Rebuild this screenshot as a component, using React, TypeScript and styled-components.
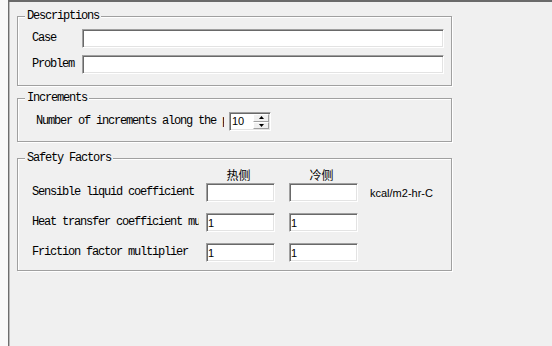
import React from 'react';
import styled, { createGlobalStyle } from 'styled-components';

const GlobalStyle = createGlobalStyle`
  html, body {
    margin: 0;
    padding: 0;
    width: 552px;
    height: 346px;
    overflow: hidden;
    background: #f0f0f0;
  }
  #root {
    height: 100%;
  }
`;

const mono = `"Liberation Mono", "DejaVu Sans Mono", monospace`;
const sans = `"Liberation Sans", Arial, sans-serif`;

const Window = styled.div`
  display: flex;
  width: 552px;
  height: 346px;
`;

const TreeStrip = styled.div`
  width: 8px;
  flex: none;
  background: #f9f9f9;
  overflow: hidden;
  display: flex;
  flex-direction: column;
  padding-top: 64px;
  gap: 8px;
`;

const TreeItem = styled.span<{ $color: string }>`
  display: block;
  margin-left: -4px;
  font: 11px/12px ${sans};
  color: ${(p) => p.$color};
  white-space: nowrap;
`;

const Pane = styled.div`
  flex: 1;
  border-left: 1px solid #6e6e6e;
  border-top: 2px solid #6a6a6a;
  box-shadow: inset 1px 0 #b9b9b9;
  background: #f0f0f0;
  padding: 8px 0 0 8px;
`;

const Group = styled.fieldset<{ $gap?: number }>`
  margin: ${(p) => p.$gap ?? 0}px 0 0 0;
  padding: 0;
  width: 435px;
  box-sizing: border-box;
  border: 1px solid #a0a0a0;
  box-shadow: inset 1px 1px #fff, 1px 1px #fff;
  min-inline-size: 0;
`;

const Legend = styled.legend`
  margin-left: 7px;
  padding: 0 2px;
  font: 12px/12px ${mono};
  letter-spacing: -1.2px;
  color: #000;
  background: #f0f0f0;
`;

const GroupBody = styled.div<{ $pt: number; $pb: number; $pl: number }>`
  padding: ${(p) => p.$pt}px 0 ${(p) => p.$pb}px ${(p) => p.$pl}px;
  display: flex;
  flex-direction: column;
  gap: 7px;
`;

const FieldRow = styled.div`
  display: flex;
  align-items: center;
  height: 19px;
`;

const Label = styled.span<{ $width: number; $after?: number }>`
  width: ${(p) => p.$width}px;
  margin-right: ${(p) => p.$after ?? 0}px;
  flex: none;
  font: 12px/13px ${mono};
  letter-spacing: -1.2px;
  color: #000;
  white-space: nowrap;
  overflow: hidden;
`;

const TextBox = styled.input<{ $width: number }>`
  width: ${(p) => p.$width}px;
  height: 19px;
  box-sizing: border-box;
  margin: 0;
  padding: 0 1px;
  border: 1px solid;
  border-color: #a0a0a0 #fff #fff #a0a0a0;
  box-shadow: inset 1px 1px #696969, inset -1px -1px #e3e3e3;
  background: #fff;
  font: 11px ${sans};
  color: #000;
  outline: none;
`;

const Spinner = styled.div`
  display: flex;
  width: 42px;
  height: 19px;
  box-sizing: border-box;
  border: 1px solid;
  border-color: #a0a0a0 #fff #fff #a0a0a0;
  box-shadow: inset 1px 1px #696969, inset -1px -1px #e3e3e3;
  background: #fff;
  padding: 1px;
`;

const SpinValue = styled.span`
  flex: 1;
  font: 11px/15px ${sans};
  color: #000;
  padding-left: 1px;
`;

const SpinButtons = styled.div`
  width: 16px;
  display: flex;
  flex-direction: column;
`;

const SpinButton = styled.span`
  flex: 1;
  display: flex;
  align-items: center;
  justify-content: center;
  background: #f0f0f0;
  box-sizing: border-box;
  border: 1px solid;
  border-color: #fff #a0a0a0 #a0a0a0 #fff;
`;

const SafetyBody = styled.div`
  padding: 2px 0 8px 14px;
  display: flex;
  flex-direction: column;
`;

const SafetyHead = styled.div`
  display: flex;
  height: 17px;
  align-items: center;
  padding-left: 174px;
  gap: 14px;
`;

const SafetyGrid = styled.div`
  display: grid;
  grid-template-columns: 174px 83px 81px auto;
  grid-auto-rows: 19px;
  row-gap: 11px;
  align-items: center;
`;

const ColHead = styled.span`
  width: 69px;
  text-align: center;
  padding-right: 4px;
  box-sizing: border-box;
  font: 12px/16px "Noto Sans CJK SC", sans-serif;
  color: #000;
`;

const Unit = styled.span`
  font: 11px ${sans};
  color: #000;
`;

function Arrow({ up }: { up?: boolean }) {
  return (
    <svg width="5" height="3" viewBox="0 0 5 3">
      <path d={up ? 'M2.5 0 L5 3 L0 3 Z' : 'M0 0 L5 0 L2.5 3 Z'} fill="#000" />
    </svg>
  );
}

const safetyRows = [
  { label: 'Sensible liquid coefficient', hot: '', cold: '', unit: 'kcal/m2-hr-C' },
  { label: 'Heat transfer coefficient multiplier', hot: '1', cold: '1', unit: '' },
  { label: 'Friction factor multiplier', hot: '1', cold: '1', unit: '' },
];

export default function App() {
  return (
    <>
      <GlobalStyle />
      <Window>
        <TreeStrip>
          <TreeItem $color="#5a1030">r</TreeItem>
          <TreeItem $color="#1e5cc8">r</TreeItem>
        </TreeStrip>
        <Pane>
          <Group>
            <Legend>Descriptions</Legend>
            <GroupBody $pt={7} $pb={11} $pl={14}>
              <FieldRow>
                <Label $width={50}>Case</Label>
                <TextBox $width={362} defaultValue="" />
              </FieldRow>
              <FieldRow>
                <Label $width={50}>Problem</Label>
                <TextBox $width={362} defaultValue="" />
              </FieldRow>
            </GroupBody>
          </Group>

          <Group $gap={6}>
            <Legend>Increments</Legend>
            <GroupBody $pt={8} $pb={10} $pl={18}>
              <FieldRow>
                <Label $width={188} $after={5}>
                  Number of increments along the pipe
                </Label>
                <Spinner>
                  <SpinValue>10</SpinValue>
                  <SpinButtons>
                    <SpinButton>
                      <Arrow up />
                    </SpinButton>
                    <SpinButton>
                      <Arrow />
                    </SpinButton>
                  </SpinButtons>
                </Spinner>
              </FieldRow>
            </GroupBody>
          </Group>

          <Group $gap={10}>
            <Legend>Safety Factors</Legend>
            <SafetyBody>
              <SafetyHead>
                <ColHead>热侧</ColHead>
                <ColHead>冷侧</ColHead>
              </SafetyHead>
              <SafetyGrid>
                {safetyRows.map((r) => (
                  <React.Fragment key={r.label}>
                    <Label $width={167}>{r.label}</Label>
                    <TextBox $width={69} defaultValue={r.hot} />
                    <TextBox $width={69} defaultValue={r.cold} />
                    <Unit>{r.unit}</Unit>
                  </React.Fragment>
                ))}
              </SafetyGrid>
            </SafetyBody>
          </Group>
        </Pane>
      </Window>
    </>
  );
}
